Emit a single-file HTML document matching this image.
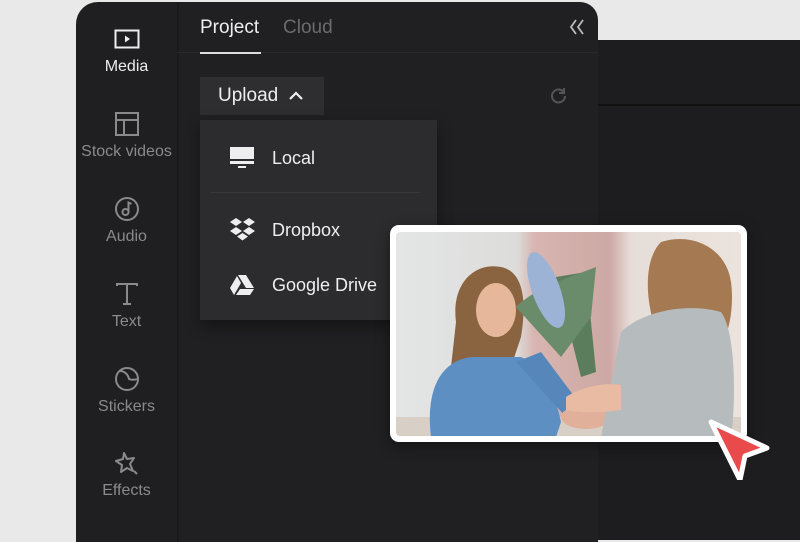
<!DOCTYPE html>
<html><head><meta charset="utf-8"><style>
*{margin:0;padding:0;box-sizing:border-box}
body{width:800px;height:533px;overflow:hidden;background:#e9e9e9;font-family:"Liberation Sans",sans-serif;position:relative}
.side{position:absolute;left:76px;top:2px;width:101px;height:540px;background:#1f1f21;border-top-left-radius:22px}
.main{position:absolute;left:177px;top:2px;width:421px;height:540px;background:#202022;border-top-right-radius:18px;border-left:2px solid #19191a}
.right{position:absolute;left:598px;top:40px;width:202px;height:500px;background:#1d1d1f}
.right .div{position:absolute;left:0;top:64px;width:202px;height:2px;background:#111}
.ic{position:absolute;left:76px;width:101px;text-align:center}
.ic svg{display:block;margin:0 auto}
.lb{position:absolute;left:70px;width:113px;text-align:center;font-size:16px;line-height:18px;color:#8a8a8c}
.tab{position:absolute;top:17px;font-size:19px}
.upl{position:absolute;left:200px;top:77px;width:124px;height:38px;background:#2e2e30;color:#eee;font-size:19px;padding:8px 0 0 18px}
.dd{position:absolute;left:200px;top:120px;width:237px;height:200px;background:#2c2c2e;box-shadow:0 6px 14px rgba(0,0,0,.4)}
.dd .r{position:absolute;left:72px;font-size:18px;color:#eee}
.dd svg{position:absolute;left:30px}
</style></head><body>
<div class="side"></div>
<div class="main"></div>
<div class="right"><div class="div"></div></div>
<div style="position:absolute;left:177px;top:52px;width:421px;height:1px;background:#2a2a2c"></div>

<div class="ic" style="top:29px"><svg width="26" height="20"><rect x="1.5" y="1.5" width="23" height="17" fill="none" stroke="#eee" stroke-width="2"/><path d="M11 6.5l5 3.5-5 3.5z" fill="#eee"/></svg></div>
<div class="lb" style="top:58px;color:#eee">Media</div>
<div class="ic" style="top:112px"><svg width="24" height="24"><rect x="1" y="1" width="22" height="22" fill="none" stroke="#8a8a8c" stroke-width="2"/><path d="M1 8h22M9 8v15" stroke="#8a8a8c" stroke-width="2"/></svg></div>
<div class="lb" style="top:143px">Stock videos</div>
<div class="ic" style="top:196px"><svg width="26" height="26"><circle cx="13" cy="13" r="11" fill="none" stroke="#8a8a8c" stroke-width="2"/><circle cx="11.5" cy="16" r="3" fill="none" stroke="#8a8a8c" stroke-width="2"/><path d="M14.5 16V6.5l3 1.5" fill="none" stroke="#8a8a8c" stroke-width="2"/></svg></div>
<div class="lb" style="top:228px">Audio</div>
<div class="ic" style="top:282px"><svg width="24" height="24"><path d="M2 4V2h20v2M12 2v20M8 22h8" fill="none" stroke="#8a8a8c" stroke-width="2"/></svg></div>
<div class="lb" style="top:313px">Text</div>
<div class="ic" style="top:366px"><svg width="26" height="26"><circle cx="13" cy="13" r="11" fill="none" stroke="#8a8a8c" stroke-width="2"/><path d="M6 5c4 0 8 3 9 8 2 1 6 1 8 0" fill="none" stroke="#8a8a8c" stroke-width="2"/></svg></div>
<div class="lb" style="top:398px">Stickers</div>
<div class="ic" style="top:451px"><svg width="26" height="26"><path d="M10 2l3 6 7-1-4 6 3 7-6-3-6 4 1-7-6-4 7-2z" fill="none" stroke="#8a8a8c" stroke-width="2" stroke-linejoin="round"/><path d="M20 20l3 3" stroke="#8a8a8c" stroke-width="2"/></svg></div>
<div class="lb" style="top:482px">Effects</div>

<div class="tab" style="left:200px;color:#eee">Project</div>
<div style="position:absolute;left:200px;top:52px;width:61px;height:2px;background:#ddd"></div>
<div class="tab" style="left:283px;color:#6b6b6d">Cloud</div>
<svg style="position:absolute;left:569px;top:19px" width="16" height="16"><path d="M7 1L2 8l5 7M14 1L9 8l5 7" fill="none" stroke="#bbb" stroke-width="1.8"/></svg>
<svg style="position:absolute;left:549px;top:86px" width="20" height="20"><path d="M16 10a6.5 6.5 0 1 1-2-4.7" fill="none" stroke="#555" stroke-width="2"/><path d="M15 2v5h-5" fill="none" stroke="#555" stroke-width="2"/></svg>

<div class="upl">Upload <svg width="16" height="11" style="margin-left:4px"><path d="M2 9l6-6 6 6" fill="none" stroke="#eee" stroke-width="2.2"/></svg></div>
<div class="dd">
<svg style="top:27px" width="24" height="21"><rect x="0" y="0" width="24" height="12" fill="#eee"/><rect x="0" y="14" width="24" height="3" fill="#eee"/><rect x="8" y="19" width="8" height="2" fill="#eee"/></svg>
<div class="r" style="top:28px">Local</div>
<div style="position:absolute;left:10px;top:72px;width:210px;height:1px;background:#38383a"></div>
<svg style="top:98px" width="25" height="23"><g fill="#eee"><path d="M6 0l6 4-6 4-6-4z"/><path d="M19 0l6 4-6 4-6-4z"/><path d="M6 9l6 4-6 4-6-4z"/><path d="M19 9l6 4-6 4-6-4z"/><path d="M12.5 15l5.5 3.5-5.5 4-5.5-4z"/></g></svg>
<div class="r" style="top:100px">Dropbox</div>
<svg style="top:155px" width="24" height="20"><g fill="#eee"><path d="M8 0h8l8 13h-8z"/><path d="M7 1l4 7-7 12-4-7z"/><path d="M6 20l4-6h14l-4 6z"/></g></svg>
<div class="r" style="top:155px">Google Drive</div>
</div>

<div style="position:absolute;left:390px;top:225px;width:357px;height:217px;background:#fff;border-radius:9px;box-shadow:0 4px 14px rgba(0,0,0,.4)"></div>
<svg style="position:absolute;left:396px;top:232px;border-radius:4px" width="345" height="204">
<defs><linearGradient id="wall" x1="0" x2="1"><stop offset="0" stop-color="#e4e6e6"/><stop offset=".35" stop-color="#dcdcda"/><stop offset=".4" stop-color="#d8b5b0"/><stop offset=".62" stop-color="#cda8a4"/><stop offset=".68" stop-color="#e6ddd8"/><stop offset="1" stop-color="#ebe3dc"/></linearGradient></defs>
<rect width="345" height="204" fill="url(#wall)"/>
<rect x="0" y="185" width="345" height="19" fill="#d8d0c6"/>
<path d="M60 90c-5-40 20-60 45-55 25 5 25 40 20 70l-10 30-60 0z" fill="#8a6440"/>
<ellipse cx="100" cy="78" rx="20" ry="27" fill="#e7b79c"/>
<path d="M35 205c-5-40 5-75 40-80h50c20 8 35 40 40 65l-5 15z" fill="#5e8fc3"/>
<path d="M120 130l50 55 20-5-45-60z" fill="#5786bb"/>
<path d="M160 45l25 100 15-5-10-100z" fill="#5b7d5b"/>
<path d="M120 75c20-20 55-30 80-40l-5 50-30 40z" fill="#6b8c6a"/>
<ellipse cx="150" cy="58" rx="14" ry="40" fill="#9cb3d6" transform="rotate(-20 150 58)"/>
<ellipse cx="190" cy="185" rx="25" ry="12" fill="#e0b09a"/>
<path d="M265 10c30-10 65 5 70 40 5 40-10 70-20 80l-50-20c-15-30-20-80 0-100z" fill="#a57a52"/>
<path d="M205 205l20-105c20-20 65-30 100-20 15 20 15 90 10 125z" fill="#b6bbbe"/>
<path d="M170 165c15-10 40-15 55-12l0 25c-20 3-40 3-55 0z" fill="#e8bba2"/>
</svg>
<svg style="position:absolute;left:704px;top:414px" width="70" height="66"><path d="M7 8l56 26-22 8-5 24z" fill="#e94a4b" stroke="#fff" stroke-width="5" stroke-linejoin="round"/></svg>
</body></html>
